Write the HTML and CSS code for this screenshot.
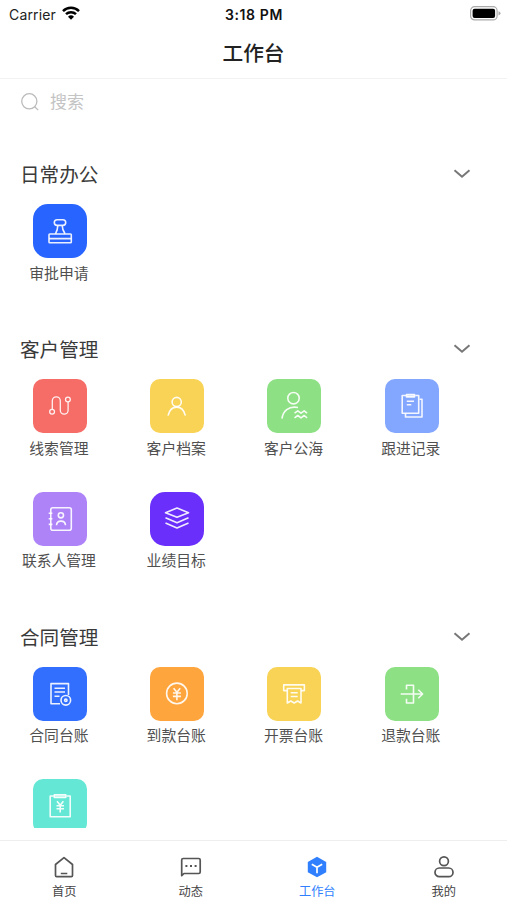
FILE: index.html
```
<!DOCTYPE html>
<html lang="zh-CN">
<head>
    <meta charset="UTF-8">
    <meta name="viewport" content="width=device-width, initial-scale=1.0">
    <title>工作台</title>
    <link rel="stylesheet" href="styles.css">
</head>
<body>
    <div class="status-bar">
        <div class="carrier">
            <span>Carrier</span>
            <svg width="18" height="14" viewBox="0 0 18 14" fill="none" stroke="#000" stroke-width="2.5">
                <path d="M1 5.1a11.4 11.4 0 0 1 16 0M4 8.2a7.2 7.2 0 0 1 10 0"/>
                <path d="M9 13.7L6 10.7a4.3 4.3 0 0 1 6 0z" fill="#000" stroke="none"/>
            </svg>
        </div>
        <div class="time">3:18 PM</div>
        <div class="battery">
            <svg width="31" height="15" viewBox="0 0 31 15">
                <rect x=".6" y=".7" width="26.5" height="13.2" rx="4" fill="#fff" stroke="#aaa" stroke-width="1.2"/>
                <rect x="2.6" y="2.7" width="22.5" height="9.2" rx="2" fill="#000"/>
                <path d="M28.5 5.2q2 .6 2 2.1t-2 2.1z" fill="#aaa"/>
            </svg>
        </div>
    </div>
    <header class="nav-bar"><h1>工作台</h1></header>

    <main class="content">
        <div class="search">
            <svg width="20" height="20" viewBox="0 0 20 20" fill="none" stroke="#bbb" stroke-width="1.3">
                <circle cx="9.3" cy="9.3" r="7.6"/>
                <path d="M14.7 14.7l3.5 3.4"/>
            </svg>
            <span>搜索</span>
        </div>

        <!-- 日常办公 -->
        <section class="group">
            <div class="group-header">
                <h2>日常办公</h2>
                <svg class="arrow" viewBox="0 0 18 10"><path d="M1.5 1.2L9 7.7l7.5-6.5"/></svg>
            </div>
            <div class="grid">
                <div class="item">
                    <svg class="tile tile-large blue" viewBox="0 0 54 54">
                        <rect x="21.3" y="15.8" width="11.4" height="5.6" rx="2.8"/>
                        <path d="M24.8 21.5q0 4-2.3 8.3M29.2 21.5q0 4 2.8 8.3"/>
                        <rect x="16" y="30" width="22.3" height="8.8" rx=".8"/>
                        <path d="M16 34.600h22.3"/>
                    </svg>
                    <span>审批申请</span>
                </div>
            </div>
        </section>

        <!-- 客户管理 -->
        <section class="group">
            <div class="group-header">
                <h2>客户管理</h2>
                <svg class="arrow" viewBox="0 0 18 10"><path d="M1.5 1.2L9 7.7l7.5-6.5"/></svg>
            </div>
            <div class="grid">
                <div class="item">
                    <svg class="tile red thin" viewBox="0 0 54 54">
                        <circle cx="19.1" cy="32.7" r="2.4"/>
                        <circle cx="34.9" cy="20.5" r="2.4"/>
                        <path d="M19.3 30.2V21.8a4 4 0 0 1 8 0V31.2a3.9 3.9 0 0 0 7.8 0V23"/>
                    </svg>
                    <span>线索管理</span>
                </div>
                <div class="item">
                    <svg class="tile yellow" viewBox="0 0 54 54">
                        <circle cx="26.7" cy="23" r="4.6"/>
                        <path d="M18 36.6c1.3-5.4 4.5-8.5 8.7-8.5s7.4 3.1 8.7 8.5"/>
                    </svg>
                    <span>客户档案</span>
                </div>
                <div class="item">
                    <svg class="tile green" viewBox="0 0 54 54">
                        <circle cx="26.5" cy="19.2" r="5.7"/>
                        <path d="M15 39.7c.8-7.5 6.5-13 16-11.2"/>
                        <path d="M27.5 34.2l3.3-2.4 3.2 2.4 3.2-2.4 2.9 2.4M27.5 38.9l3.3-2.4 3.2 2.4 3.2-2.4 2.9 2.4"/>
                    </svg>
                    <span>客户公海</span>
                </div>
                <div class="item">
                    <svg class="tile periwinkle" viewBox="0 0 54 54">
                        <path d="M21 16.5h-3.8v17.7h16.5V16.5h-3.5"/>
                        <rect x="21.5" y="15.5" width="8" height="2.4" fill="#d5e0ff"/>
                        <path d="M21.8 22.2h7.2M21.8 25.7h4.5M34.5 20.3h2.5V38H20.5v-3.5"/>
                    </svg>
                    <span>跟进记录</span>
                </div>
                <div class="item">
                    <svg class="tile purple" viewBox="0 0 54 54">
                        <rect x="17.8" y="15.7" width="20.5" height="22.5" rx="2"/>
                        <circle cx="27.9" cy="23.3" r="2.6"/>
                        <path d="M23.5 33.3c.3-5.6 8.7-5.6 9 0M15.7 21.2h3.7M15.7 26.8h3.7M15.7 32.4h3.7"/>
                    </svg>
                    <span>联系人管理</span>
                </div>
                <div class="item">
                    <svg class="tile tile-large violet" viewBox="0 0 54 54">
                        <path d="M27 16l11.5 4.7L27 25.3l-11.5-4.6zM15.5 25.7L27 30.8l11.5-5.1M15.5 31L27 36l11.5-5"/>
                    </svg>
                    <span>业绩目标</span>
                </div>
            </div>
        </section>

        <!-- 合同管理 -->
        <section class="group">
            <div class="group-header">
                <h2>合同管理</h2>
                <svg class="arrow" viewBox="0 0 18 10"><path d="M1.5 1.2L9 7.7l7.5-6.5"/></svg>
            </div>
            <div class="grid">
                <div class="item">
                    <svg class="tile royal" viewBox="0 0 54 54">
                        <path d="M27 36.8h-9V16.6h17.5v11.5M21.5 21.3h10.5M21.5 25h10.5M21.5 29.3h5"/>
                        <circle cx="32.8" cy="33.3" r="4.8"/>
                        <circle cx="32.8" cy="33.3" r="1.2"/>
                    </svg>
                    <span>合同台账</span>
                </div>
                <div class="item">
                    <svg class="tile orange" viewBox="0 0 54 54">
                        <circle cx="26.9" cy="26.4" r="10.3"/>
                        <path d="M23.6 21.3l3.3 4 3.3-4M26.9 25.3v8M22.9 26h8M22.9 29.4h8"/>
                    </svg>
                    <span>到款台账</span>
                </div>
                <div class="item">
                    <svg class="tile yellow" viewBox="0 0 54 54">
                        <path d="M20 23.6h-3.3v-5.7h20.7v5.7H34"/>
                        <path d="M20.3 21.5h13.7V36l-3.4-2-3.4 2-3.4-2-3.5 2z"/>
                        <path d="M23.7 25.7h7M23.7 29.5h7"/>
                    </svg>
                    <span>开票台账</span>
                </div>
                <div class="item">
                    <svg class="tile green" viewBox="0 0 54 54">
                        <path d="M21.5 22.5v-4.2h7V36h-7v-4.2M15.7 27h21.7M33.3 22.8l4.3 4.2-4.3 4.2"/>
                    </svg>
                    <span>退款台账</span>
                </div>
                <div class="item">
                    <svg class="tile teal" viewBox="0 0 54 54">
                        <path d="M20.8 17h-3.6v20.7h20V17h-3.7"/>
                        <rect x="21.3" y="15.7" width="11.5" height="2.8" fill="#b9f6eb"/>
                        <path d="M24 22.3l3.2 4 3.2-4M27.2 26.3v7.2M23.5 26.8h7.5M23.5 29.8h7.5"/>
                    </svg>
                </div>
            </div>
        </section>
    </main>

    <nav class="tab-bar">
        <div class="tab">
            <svg viewBox="0 0 24 24">
                <path d="M3.5 9.5L12 2.7l8.5 6.8v11q0 1.2-1.2 1.2H4.7q-1.2 0-1.2-1.2zM8.8 18.5h6.5"/>
            </svg>
            <span>首页</span>
        </div>
        <div class="tab">
            <svg viewBox="0 0 24 24">
                <path d="M2.7 20.7V5q0-1.5 1.5-1.5h15.5q1.5 0 1.5 1.5v12q0 1.5-1.5 1.5H5z"/>
                <path d="M6.4 11h2M11 11h2M15.6 11h2" stroke-width="2"/>
            </svg>
            <span>动态</span>
        </div>
        <div class="tab active">
            <svg viewBox="0 0 24 24">
                <path d="M12 1.8l9.2 5.2v10.2L12 22.3l-9.2-5.1V7z" fill="#2f7fff" stroke="none"/>
                <path d="M6.8 9.2l5.2 3 5.2-3M12 12.2v6" stroke="#fff"/>
            </svg>
            <span>工作台</span>
        </div>
        <div class="tab">
            <svg viewBox="0 0 24 24">
                <circle cx="12" cy="6.2" r="4.4"/>
                <rect x="3" y="13" width="18" height="8.7" rx="4.3"/>
            </svg>
            <span>我的</span>
        </div>
    </nav>
</body>
</html>
```
FILE: styles.css
```
* {
    box-sizing: border-box;
}
body {
    margin: 0;
    height: 900px;
    display: flex;
    flex-direction: column;
    overflow: hidden;
    background: #fff;
    color: #3a3a3a;
    font-family: "Noto Sans CJK SC", sans-serif;
}
h1, h2 {
    margin: 0;
}
svg {
    display: block;
    flex: none;
}
.status-bar {
    height: 28px;
    padding: 0 6px 0 9px;
    display: grid;
    grid-template-columns: 1fr auto 1fr;
    align-items: center;
    font-family: Inter, sans-serif;
    font-size: 14px;
    color: #222;
}
.carrier {
    display: flex;
    align-items: center;
    gap: 6px;
    letter-spacing: 0.15px;
}
.carrier svg {
    margin-top: -3px;
}
.time {
    margin-right: 2px;
    font-weight: 600;
    font-size: 14px;
    letter-spacing: 0.6px;
    color: #111;
}
.battery {
    display: flex;
    justify-content: flex-end;
    margin-top: -2px;
}
.nav-bar {
    height: 51px;
    border-bottom: 1px solid #f2f2f2;
    text-align: center;
}
.nav-bar h1 {
    font-size: 20.7px;
    font-weight: 500;
    line-height: 49px;
    color: #222;
}
.content {
    height: 749px;
    overflow: hidden;
}
.search {
    height: 45px;
    padding: 0 0 2px 20px;
    display: flex;
    align-items: center;
    gap: 10px;
    font-size: 17px;
    color: #c4c4c4;
}
.search svg {
    margin-top: 3px;
}
.group {
    margin-bottom: 17.4px;
}
.search + .group {
    margin-top: 35px;
}
.group-header {
    height: 30px;
    margin-bottom: 15px;
    padding: 0 36px 0 20px;
    display: flex;
    align-items: center;
    justify-content: space-between;
}
.group-header h2 {
    font-size: 19.6px;
    font-weight: 400;
    line-height: 30px;
}
.arrow {
    width: 18px;
    height: 10px;
    fill: none;
    stroke: #777;
    stroke-width: 2;
}
.grid {
    width: 471px;
    display: grid;
    grid-template-columns: repeat(4, 117.3px);
    grid-auto-rows: 112.6px;
    padding-left: 1px;
}
.item {
    display: flex;
    flex-direction: column;
    align-items: center;
    font-size: 14.8px;
    line-height: 22px;
    color: #505050;
}
.item span {
    margin: 3.6px 1.5px 0 0;
}
.tile {
    width: 54px;
    height: 54px;
    border-radius: 10px;
    fill: none;
    stroke: #fff;
    stroke-opacity: 0.9;
    stroke-width: 1.6;
    stroke-linejoin: round;
}
.tile-large {
    border-radius: 15px;
}
.thin {
    stroke-width: 1.3;
}
.blue { background: #2864ff; }
.red { background: #f66c66; }
.yellow { background: #f9d355; }
.green { background: #8de184; }
.periwinkle { background: #83a6ff; }
.purple { background: #ae83f8; }
.violet { background: #6a2ffb; }
.royal { background: #336fff; }
.orange { background: #ffa53e; }
.teal { background: #64e8d5; }
.tab-bar {
    height: 60px;
    margin-top: auto;
    padding-left: 1px;
    border-top: 1px solid #eee;
    display: flex;
}
.tab {
    flex: 1;
    padding-top: 14px;
    display: flex;
    flex-direction: column;
    align-items: center;
    font-size: 12.2px;
    line-height: 18px;
    color: #444;
}
.tab svg {
    width: 24px;
    height: 24px;
    fill: none;
    stroke: #555;
    stroke-width: 1.7;
    stroke-linejoin: round;
}
.tab span {
    margin-top: 3px;
}
.tab.active {
    color: #2f7fff;
}
```
